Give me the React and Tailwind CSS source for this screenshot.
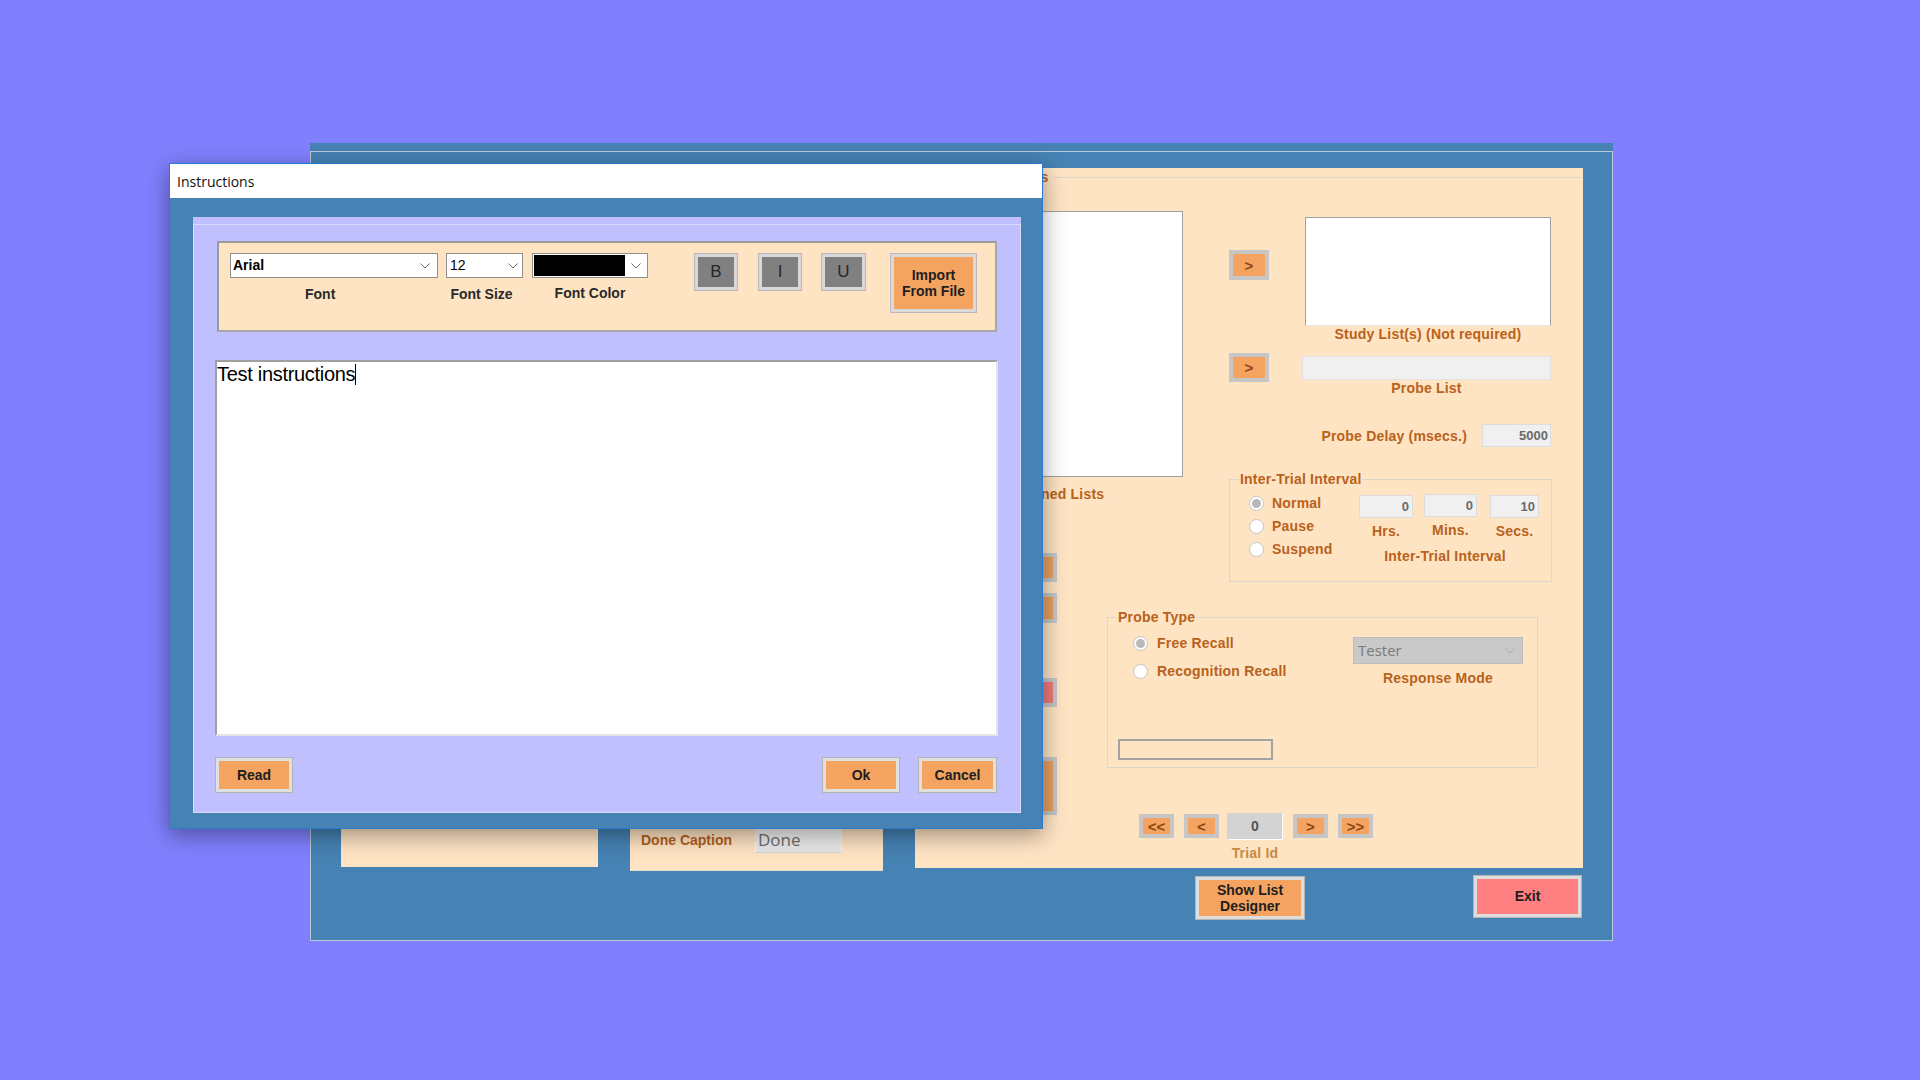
const LBL = "text-[14px] font-bold leading-[16px] text-[#b8621b] tracking-[0.2px]";

function Chevron({ color = "#6b6b6b" }) {
  return (
    <svg width="10" height="6" viewBox="0 0 10 6" fill="none">
      <polyline points="0.5,0.5 5,5 9.5,0.5" stroke={color} strokeWidth="1" />
    </svg>
  );
}

function Radio({ checked }) {
  return (
    <span className="w-[15px] h-[15px] rounded-full border border-[#c4c4c4] bg-white flex items-center justify-center shrink-0">
      {checked && <span className="w-[9px] h-[9px] rounded-full bg-[#b8b8b8]" />}
    </span>
  );
}

function NavButton({ children, className }) {
  return (
    <div
      className={`h-[24px] mt-[1px] border-[4px] border-[#c6c6c6] bg-[#f4a460] flex items-center justify-center text-[15px] font-bold leading-none text-[#8b4513] ${className}`}
    >
      {children}
    </div>
  );
}

function RightPanel() {
  return (
    <div className="ml-[32px] w-[668px] h-[700px] bg-[#ffe4c4] flex flex-col">
      {/* group header */}
      <div className="h-[18px] flex items-center pl-[66px]">
        <span className={LBL}>Trial Lists</span>
        <div className="ml-[5px] mr-[1px] flex-1 border-t border-[#dcd6ce]" />
      </div>

      <div className="flex">
        {/* left column */}
        <div className="ml-[20px] w-[248px] flex flex-col">
          <div className="mt-[25px] h-[266px] bg-white border border-[#a0a0a0]" />
          <div className={`mt-[9px] text-center ${LBL}`}>Defined Lists</div>
          <div className="ml-[22px] w-[100px] flex flex-col">
            <div className="mt-[51px] h-[29px] border-[4px] border-[#c6c6c6] bg-[#e9a060]" />
            <div className="mt-[11px] h-[30px] border-[4px] border-[#c6c6c6] bg-[#e9a060]" />
            <div className="mt-[55px] h-[29px] border-[4px] border-[#c6c6c6] bg-[#f07a7a]" />
            <div className="mt-[50px] h-[58px] border-[4px] border-[#c6c6c6] bg-[#e9a060]" />
          </div>
        </div>

        {/* right column */}
        <div className="flex flex-col">
          <div className="mt-[31px] ml-[46px] flex items-start">
            <NavButton className="mt-[33px] w-[40px] h-[30px]">&gt;</NavButton>
            <div className="ml-[36px] w-[246px] flex flex-col">
              <div className="h-[109px] bg-white border border-[#a0a0a0] border-b-[#e6e6e6]" />
              <div className={`text-center ${LBL}`}>Study List(s) (Not required)</div>
            </div>
          </div>

          <div className="mt-[10px] ml-[46px] flex items-start">
            <NavButton className="w-[40px] h-[29px]">&gt;</NavButton>
            <div className="ml-[33px] mt-[4px] w-[249px] flex flex-col">
              <div className="h-[24px] bg-[#f0f0f0] border border-[#e2e2e2]" />
              <div className={`text-center ${LBL}`}>Probe List</div>
            </div>
          </div>

          <div className="mt-[28px] ml-[46px] w-[323px] flex items-center justify-end">
            <span className={`mr-[15px] ${LBL}`}>Probe Delay (msecs.)</span>
            <div className="mr-[1px] w-[69px] h-[23px] bg-[#f0f0f0] border border-[#dcdcdc] flex items-center justify-end pr-[2px] text-[13px] font-bold text-[#6a6a6a]">
              5000
            </div>
          </div>

          {/* Inter-Trial Interval */}
          <div className="mt-[32px] ml-[46px] w-[323px] h-[103px] border border-[#dcd6ce] relative flex">
            <span className={`absolute -top-[9px] left-[9px] px-[1px] bg-[#ffe4c4] ${LBL}`}>
              Inter-Trial Interval
            </span>
            <div className="ml-[19px] w-[110px] pt-[12px] flex flex-col gap-[1px]">
              {[
                ["Normal", true],
                ["Pause", false],
                ["Suspend", false],
              ].map(([label, checked]) => (
                <div key={label} className="h-[22px] flex items-center">
                  <Radio checked={checked} />
                  <span className={`ml-[8px] ${LBL}`}>{label}</span>
                </div>
              ))}
            </div>
            <div className="mt-[15px] flex flex-col">
              <div className="flex items-start">
                {[
                  ["0", "Hrs.", "w-[54px]", "ml-[0px] mt-[0px]"],
                  ["0", "Mins.", "w-[53px]", "ml-[11px] -mt-[1px]"],
                  ["10", "Secs.", "w-[49px]", "ml-[13px] mt-[0px]"],
                ].map(([v, label, w, m]) => (
                  <div key={label} className={`flex flex-col items-center ${m}`}>
                    <div
                      className={`${w} h-[23px] bg-[#f0f0f0] border border-[#dcdcdc] flex items-center justify-end pr-[3px] text-[13px] font-bold text-[#6a6a6a]`}
                    >
                      {v}
                    </div>
                    <span className={`mt-[5px] ${LBL}`}>{label}</span>
                  </div>
                ))}
              </div>
              <div className={`mt-[9px] pr-[8px] text-center ${LBL}`}>Inter-Trial Interval</div>
            </div>
          </div>

          {/* Probe Type */}
          <div className="mt-[35px] -ml-[76px] w-[431px] h-[151px] border border-[#dcd6ce] relative flex flex-col">
            <span className={`absolute -top-[9px] left-[9px] px-[1px] bg-[#ffe4c4] ${LBL}`}>Probe Type</span>
            <div className="flex items-start">
              <div className="ml-[25px] mt-[14px] flex flex-col gap-[6px]">
                {[
                  ["Free Recall", true],
                  ["Recognition Recall", false],
                ].map(([label, checked]) => (
                  <div key={label} className="h-[22px] flex items-center">
                    <Radio checked={checked} />
                    <span className={`ml-[9px] ${LBL}`}>{label}</span>
                  </div>
                ))}
              </div>
              <div className="ml-auto mr-[14px] mt-[19px] w-[170px] flex flex-col">
                <div className="h-[27px] bg-[#c9c9c9] border border-[#bdbdbd] flex items-center justify-between pl-[4px] pr-[7px]">
                  <span className="text-[15px] font-['Open_Sans'] text-[#7a7a7a]">Tester</span>
                  <Chevron color="#a8a8a8" />
                </div>
                <div className={`mt-[6px] text-center ${LBL}`}>Response Mode</div>
              </div>
            </div>
            <div className="ml-[10px] mt-[53px] w-[155px] h-[21px] border-2 border-[#a3a3a3]" />
          </div>

          {/* Trial navigation */}
          <div className="mt-[45px] -ml-[44px] flex items-start">
            <NavButton className="w-[35px]">&lt;&lt;</NavButton>
            <NavButton className="ml-[10px] w-[35px]">&lt;</NavButton>
            <div className="ml-[8px] w-[56px] flex flex-col items-center">
              <div className="w-[56px] h-[27px] bg-[#d3d3d3] border border-[#d3d3d3] border-b-white border-r-white flex items-center justify-center text-[14px] font-bold text-[#555555]">
                0
              </div>
              <span className="mt-[5px] text-[14px] font-bold leading-[16px] tracking-[0.2px] text-[#c98a46]">Trial Id</span>
            </div>
            <NavButton className="ml-[10px] w-[35px]">&gt;</NavButton>
            <NavButton className="ml-[10px] w-[35px]">&gt;&gt;</NavButton>
          </div>
        </div>
      </div>
    </div>
  );
}

function MainWindow() {
  return (
    <div className="absolute left-[310px] top-[143px] w-[1303px] h-[798px] bg-[#4682b4] pt-[8px] flex flex-col">
      <div className="flex-1 border border-[#b7c9da] flex flex-col">
        <div className="flex items-start pt-[16px] pl-[30px]">
          <div className="w-[257px] h-[699px] bg-[#ffe4c4]" />
          <div className="ml-[32px] w-[253px] h-[703px] bg-[#ffe4c4] border-b border-[#e9dccb] flex flex-col justify-end pb-[17px] pl-[11px]">
            <div className="flex items-center">
              <span className="text-[14px] font-bold text-[#b0601c]">Done Caption</span>
              <div className="ml-[23px] w-[87px] h-[26px] bg-gradient-to-b from-[#f7f7f7] to-[#e6e6e6] border border-[#f4f4f4] border-b-[#d0d0d0] flex items-center pl-[2px] text-[17px] font-['Open_Sans'] text-[#6e6e6e]">
                Done
              </div>
            </div>
          </div>
          <RightPanel />
        </div>
        <div className="mt-[5px] flex items-start">
          <div className="ml-[885px] mt-[1px] w-[108px] h-[42px] border-[3px] border-[#dddddd] ring-1 ring-[#b5b5b5] bg-[#f4a460] flex items-center justify-center text-center text-[14px] font-bold leading-[16px] text-[#1e1e1e]">
            Show List
            <br />
            Designer
          </div>
          <div className="ml-[170px] w-[107px] h-[41px] border-[3px] border-[#dddddd] ring-1 ring-[#b5b5b5] bg-[#ff8080] flex items-center justify-center text-[14px] font-bold text-[#1e1e1e]">
            Exit
          </div>
        </div>
      </div>
    </div>
  );
}

function DlgButton({ children, className }) {
  return (
    <div
      className={`h-[34px] border-[3px] border-[#e0e0e0] ring-1 ring-[#b3b3b3] bg-[#f4a460] flex items-center justify-center text-[14px] font-bold text-[#1e1e1e] ${className}`}
    >
      {children}
    </div>
  );
}

function StyleButton({ children, className }) {
  return (
    <div
      className={`mt-[11px] h-[36px] border-[3px] border-[#d8d8d8] ring-1 ring-[#b8b8b8] bg-[#808080] flex items-center justify-center text-[17px] text-[#262626] ${className}`}
    >
      {children}
    </div>
  );
}

function InstructionsDialog() {
  return (
    <div className="absolute left-[169px] top-[163px] w-[874px] h-[666px] border border-[#2b7ad0] bg-[#4682b4] shadow-[0_6px_22px_rgba(0,0,0,0.4)] flex flex-col">
      <div className="h-[34px] bg-white flex items-center pl-[7px] text-[14px] font-['Open_Sans'] text-[#111111]">
        Instructions
      </div>
      <div className="flex-1 pt-[19px] pl-[23px] pr-[21px] pb-[15px]">
        <div className="h-full bg-[#c0c0ff] pt-[7px]">
          <div className="h-full border border-[#dcdcf6] flex flex-col">
            {/* toolbar */}
            <div className="mt-[16px] ml-[23px] w-[780px] h-[91px] bg-[#ffe4c4] border-2 border-[#9a9a9a] border-r-[#a8a8a8] border-b-[#a8a8a8] flex items-start">
              <div className="ml-[11px] mt-[10px] w-[208px] flex flex-col">
                <div className="h-[25px] bg-white border border-[#8f8f8f] flex items-center justify-between pl-[2px] pr-[7px]">
                  <span className="text-[14px] font-bold text-black">Arial</span>
                  <Chevron />
                </div>
                <span className="ml-[75px] mt-[8px] text-[14px] font-bold leading-[16px] text-[#2a2a2a]">Font</span>
              </div>
              <div className="ml-[8px] mt-[10px] w-[77px] flex flex-col">
                <div className="h-[25px] bg-white border border-[#8f8f8f] flex items-center justify-between pl-[3px] pr-[4px]">
                  <span className="text-[14px] text-black">12</span>
                  <Chevron />
                </div>
                <span className="mt-[8px] pr-[6px] text-center text-[14px] font-bold leading-[16px] text-[#2a2a2a]">Font Size</span>
              </div>
              <div className="ml-[9px] mt-[10px] w-[116px] flex flex-col">
                <div className="h-[25px] bg-white border border-[#8f8f8f] flex items-center justify-between pl-[1px] pr-[6px]">
                  <div className="w-[91px] h-[21px] bg-black" />
                  <Chevron />
                </div>
                <span className="mt-[7px] text-center text-[14px] font-bold leading-[16px] text-[#2a2a2a]">Font Color</span>
              </div>
              <StyleButton className="ml-[47px] w-[42px]">B</StyleButton>
              <StyleButton className="ml-[22px] w-[42px]">I</StyleButton>
              <StyleButton className="ml-[21px] w-[43px]">U</StyleButton>
              <div className="ml-[26px] mt-[11px] w-[85px] h-[58px] border-[3px] border-[#dadada] ring-1 ring-[#bababa] bg-[#f4a460] flex items-center justify-center text-center text-[14px] font-bold leading-[16px] text-[#1e1e1e]">
                Import
                <br />
                From File
              </div>
            </div>

            {/* text area */}
            <div className="mt-[28px] ml-[21px] w-[783px] h-[376px] bg-white border-2 border-[#a0a0a0] border-r-[#e4e4e4] border-b-[#e4e4e4] pt-[1px]">
              <span className="text-[20px] leading-[22px] text-black tracking-[-0.3px]">Test instructions</span>
              <span className="inline-block align-top mt-[1px] w-[1px] h-[21px] bg-black" />
            </div>

            {/* buttons */}
            <div className="mt-[22px] ml-[22px] mr-[24px] flex">
              <DlgButton className="w-[76px]">Read</DlgButton>
              <DlgButton className="ml-auto w-[76px]">Ok</DlgButton>
              <DlgButton className="ml-[20px] w-[77px]">Cancel</DlgButton>
            </div>
          </div>
        </div>
      </div>
    </div>
  );
}

export default function App() {
  return (
    <div className="relative w-[1920px] h-[1080px] overflow-hidden bg-[#8080ff] font-['Liberation_Sans',Arial,sans-serif]">
      <MainWindow />
      <InstructionsDialog />
    </div>
  );
}
